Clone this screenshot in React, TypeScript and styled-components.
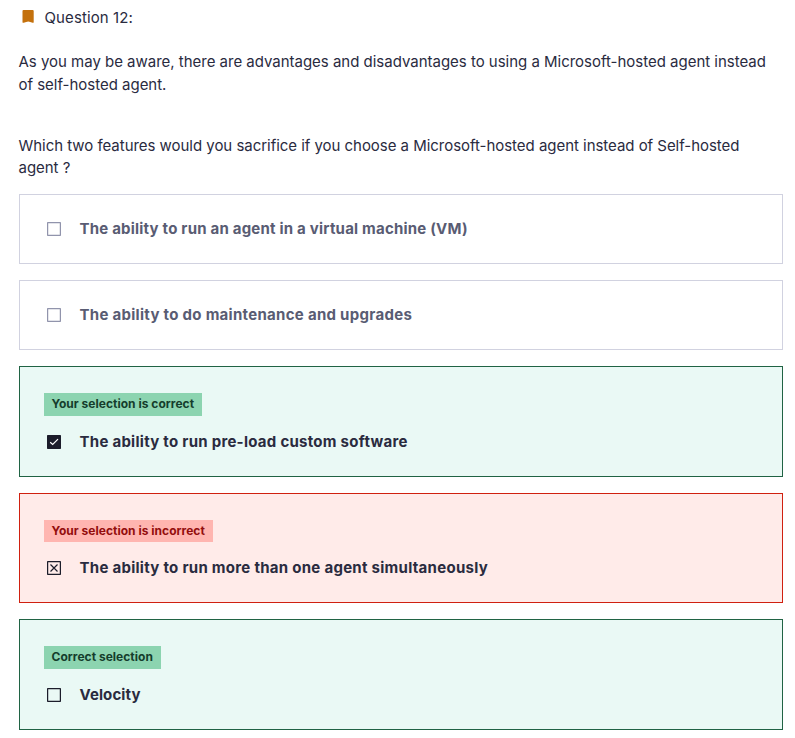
import React from 'react';
import styled, { createGlobalStyle } from 'styled-components';

const GlobalStyle = createGlobalStyle`
  *, *::before, *::after { box-sizing: border-box; }
  body { margin: 0; background: #fff; }
`;

type Variant = 'plain' | 'correct' | 'incorrect';
type Mark = 'empty' | 'check' | 'cross';

const palette = {
  plain: { bg: '#ffffff', border: '#d1d2e0', text: '#595c73', badge: 'transparent', badgeText: '#000' },
  correct: { bg: '#eaf9f5', border: '#206344', text: '#2a2b3f', badge: '#8cd4b0', badgeText: '#153d2c' },
  incorrect: { bg: '#ffebe9', border: '#d0200f', text: '#2a2b3f', badge: '#ffb5b0', badgeText: '#930d0d' },
};

const Page = styled.main`
  width: 795px;
  height: 738px;
  padding: 6px 12px 0 19px;
  overflow: hidden;
  font-family: Inter, "Liberation Sans", sans-serif;
  color: #2a2b3f;
`;

const Header = styled.header`
  display: flex;
  align-items: center;
  height: 22px;
  gap: 10.5px;
  padding-left: 3px;
  font-size: 15px;
  letter-spacing: 0.1px;
`;

const Prompt = styled.div`
  display: flex;
  flex-direction: column;
  gap: 39px;
  margin: 22px 0 0 -0.5px;
  font-size: 15px;
`;

const Paragraph = styled.p<{ $leading: number; $tracking: number }>`
  margin: 0;
  line-height: ${(p) => p.$leading}px;
  letter-spacing: ${(p) => p.$tracking}px;
`;

const Answers = styled.section`
  display: flex;
  flex-direction: column;
  gap: 16px;
  margin-top: 15px;
`;

const Answer = styled.article<{ $variant: Variant }>`
  display: flex;
  flex-direction: column;
  align-items: flex-start;
  gap: ${(p) => (p.$variant === 'incorrect' ? 15 : 15.5)}px;
  height: ${(p) => (p.$variant === 'plain' ? 70 : 110.5)}px;
  padding: ${(p) => (p.$variant === 'plain' ? 23 : 26)}px 24px 0;
  border: 1px solid ${(p) => palette[p.$variant].border};
  background: ${(p) => palette[p.$variant].bg};
  color: ${(p) => palette[p.$variant].text};
`;

const Badge = styled.span<{ $variant: Variant }>`
  padding: 0 8px 0 7.5px;
  height: 22.5px;
  line-height: 22px;
  font-size: 12px;
  font-weight: 700;
  letter-spacing: 0.02px;
  background: ${(p) => palette[p.$variant].badge};
  color: ${(p) => palette[p.$variant].badgeText};
`;

const Choice = styled.div<{ $tracking: number }>`
  display: flex;
  align-items: center;
  height: 22px;
  gap: 18.5px;
  padding-left: 3px;
  font-size: 15px;
  font-weight: 700;
  letter-spacing: ${(p) => p.$tracking}px;
`;

const ChoiceText = styled.span`
  padding-bottom: 2px;
`;

const CheckIcon = styled.svg`
  flex: none;
  width: 14px;
  height: 14px;
`;

const Box = ({ mark, color }: { mark: Mark; color: string }) => (
  <CheckIcon viewBox="0 0 14 14" fill="none" stroke={color}>
    <rect x="0.6" y="0.6" width="12.8" height="12.8" rx="0.4" strokeWidth="1.25" fill={mark === 'check' ? color : 'none'} />
    {mark === 'check' && <path d="M3.2 7.2 5.7 9.5 11 4.2" stroke="#fff" strokeWidth="1.2" />}
    {mark === 'cross' && <path d="m3.5 3.5 7 7m0-7-7 7" strokeWidth="1.2" />}
  </CheckIcon>
);

const answers: { text: string; variant: Variant; mark: Mark; tracking: number; badge?: string }[] = [
  { text: 'The ability to run an agent in a virtual machine (VM)', variant: 'plain', mark: 'empty', tracking: 0.21 },
  { text: 'The ability to do maintenance and upgrades', variant: 'plain', mark: 'empty', tracking: 0.29 },
  { text: 'The ability to run pre-load custom software', variant: 'correct', mark: 'check', tracking: 0.27, badge: 'Your selection is correct' },
  { text: 'The ability to run more than one agent simultaneously', variant: 'incorrect', mark: 'cross', tracking: 0.28, badge: 'Your selection is incorrect' },
  { text: 'Velocity', variant: 'correct', mark: 'empty', tracking: 0.1, badge: 'Correct selection' },
];

export default function App() {
  return (
    <Page>
      <GlobalStyle />
      <Header>
        <svg width="12" height="14" viewBox="0 0 12 14">
          <path d="M1.5 0h9.2a1 1 0 0 1 1 1v11.3c0 .5-.6.7-1.1.4L8.2 12q-2-1-4 0l-2.5.7c-.5.3-1.2.1-1.2-.4V1a1 1 0 0 1 1-1Z" fill="#c4710d" />
        </svg>
        <span>Question 12:</span>
      </Header>
      <Prompt>
        <Paragraph $leading={23} $tracking={-0.016}>
          As you may be aware, there are advantages and disadvantages to using a Microsoft-hosted agent instead
          <br />
          of self-hosted agent.
        </Paragraph>
        <Paragraph $leading={22} $tracking={-0.035}>
          Which two features would you sacrifice if you choose a Microsoft-hosted agent instead of Self-hosted
          <br />
          agent ?
        </Paragraph>
      </Prompt>
      <Answers>
        {answers.map((a) => (
          <Answer key={a.text} $variant={a.variant}>
            {a.badge && <Badge $variant={a.variant}>{a.badge}</Badge>}
            <Choice $tracking={a.tracking}>
              <Box mark={a.mark} color={a.variant === 'plain' ? '#9194ac' : '#1c1d2b'} />
              <ChoiceText>{a.text}</ChoiceText>
            </Choice>
          </Answer>
        ))}
      </Answers>
    </Page>
  );
}
